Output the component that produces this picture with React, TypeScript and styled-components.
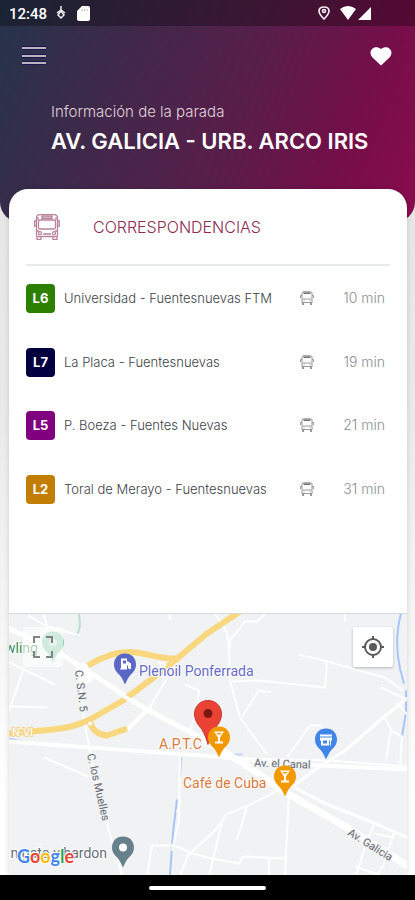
import React from "react";
import styled, { createGlobalStyle } from "styled-components";

const GlobalStyle = createGlobalStyle`
  *, *::before, *::after { box-sizing: border-box; }
  body { margin: 0; font-family: Inter, "Liberation Sans", sans-serif; }
`;

const Screen = styled.div`
  display: flex;
  flex-direction: column;
  min-height: 100vh;
  background: linear-gradient(180deg, #e2e2e2 0, #e9e9e9 400px, #ffffff 800px);
`;

const Header = styled.header`
  color: #fff;
  height: 222px;
  border-radius: 0 0 20px 20px;
  background: linear-gradient(112deg, #25344b 0%, #581e4a 56%, #740f49 80%, #8a0b4e 100%);
`;

const StatusBar = styled.div`
  display: flex;
  align-items: center;
  justify-content: space-between;
  height: 26px;
  padding: 0 44px 0 9px;
  background: rgba(0, 0, 0, 0.3);
`;

const StatusGroup = styled.div<{ $gap: number }>`
  display: flex;
  align-items: center;
  gap: ${(p) => p.$gap}px;
`;

const Clock = styled.time`
  margin-top: 2px;
  font: 500 15px/20px Roboto, sans-serif;
`;

const Toolbar = styled.nav`
  display: flex;
  align-items: center;
  justify-content: space-between;
  height: 60px;
  padding: 0 20px;
`;

const IconButton = styled.button`
  display: grid;
  place-items: center;
  width: 28px;
  height: 28px;
  padding: 0;
  border: 0;
  background: none;
  color: inherit;
  cursor: pointer;
`;

const Heading = styled.div`
  padding: 16px 0 0 51px;
`;

const Eyebrow = styled.p`
  margin: 0;
  font-size: 15px;
  font-weight: 300;
  line-height: 20px;
  color: #e0d3dc;
`;

const Title = styled.h1`
  margin: 4px 0 0;
  font-size: 22px;
  font-weight: 600;
  line-height: 30px;
  white-space: nowrap;
`;

const Card = styled.main`
  display: flex;
  flex: 1;
  flex-direction: column;
  margin: -33px 8px 0 9px;
  overflow: hidden;
  border-radius: 19px 19px 0 0;
  background: #fff;
  box-shadow: 0 0 5px rgba(0, 0, 0, 0.15);
`;

const SectionHeader = styled.div`
  display: flex;
  align-items: center;
  gap: 33px;
  height: 77px;
  margin: 0 17px;
  padding-left: 8px;
  border-bottom: 2px solid #e8eaea;
  color: #8d2a50;
`;

const SectionTitle = styled.h2`
  margin: 0;
  font-size: 16px;
  font-weight: 300;
  line-height: 20px;
`;

const Lines = styled.ul`
  flex: 1;
  margin: 0;
  padding: 0 22px 0 17px;
  list-style: none;
`;

const LineRow = styled.li`
  display: grid;
  grid-template-columns: 29px 1fr 14px 62px;
  align-items: center;
  column-gap: 9px;
  height: 64px;
  margin-bottom: -1px;

  &:nth-child(odd) {
    margin-bottom: 0;
  }
`;

const Badge = styled.span<{ $color: string }>`
  display: grid;
  place-items: center;
  height: 29px;
  border-radius: 4px;
  background: ${(p) => p.$color};
  color: #fff;
  font-size: 13px;
  font-weight: 700;
`;

const LineName = styled.span`
  color: #3c4247;
  font-size: 13px;
  font-weight: 300;
  line-height: 20px;
  white-space: nowrap;
`;

const Wait = styled.span`
  color: #8b8f92;
  font-size: 14px;
  font-weight: 300;
  line-height: 20px;
  text-align: right;
`;

const MapPanel = styled.section`
  position: relative;
  height: 262px;
  border-top: 1px solid #d6d8d9;
  background: #f0f2f3;
`;

const MapDrawing = styled.svg`
  display: block;
  width: 100%;
  height: 100%;
  font-family: Roboto, sans-serif;
`;

const MapButton = styled.button<{ $side: "left" | "right" }>`
  position: absolute;
  top: 13px;
  ${(p) => p.$side}: 14px;
  display: grid;
  place-items: center;
  width: 40px;
  height: 40px;
  padding: 0;
  border: 0;
  border-radius: 2px;
  background: ${(p) => (p.$side === "left" ? "rgba(255,255,255,.6)" : "#fff")};
  box-shadow: ${(p) => (p.$side === "left" ? "none" : "0 1px 3px rgba(0,0,0,.25)")};
  color: ${(p) => (p.$side === "left" ? "#808482" : "#5a5a5a")};
  cursor: pointer;
`;

const GoogleMark = styled.span`
  position: absolute;
  left: 8px;
  bottom: 9px;
  font: 700 18px/20px Lato, sans-serif;
  text-shadow: 1px 0 1px #fff, -1px 0 1px #fff, 0 1px 1px #fff, 0 -1px 1px #fff;
`;

const Letter = styled.span<{ $color: string }>`
  color: ${(p) => p.$color};
`;

const NavigationBar = styled.footer`
  display: grid;
  place-items: center;
  height: 25px;
  background: #000;
`;

const HomeHandle = styled.span`
  width: 28%;
  height: 4px;
  border-radius: 2px;
  background: #fff;
`;

const BusLarge = () => (
  <svg width="26" height="26" viewBox="0 0 26 26" fill="none" stroke="#b9839a" strokeWidth="1.300" aria-hidden="true">
    <path d="M2.5 22.5V4Q2.5.7 6 .7H20Q23.5.7 23.5 4V22.5" />
    <path d="M2.5 7H.7V12H2.5M23.5 7H25.300V12H23.5" />
    <rect x="4.500" y="6" width="17" height="9" rx="1.500" />
    <rect x="8" y="2" width="10" height="2.500" fill="#b9839a" fillOpacity=".5" />
    <path d="M4 6V3M22 6V3M2.500 17H5M21 17H23.500M3 22.500H23M9 20H17" />
    <path d="M3 22.500V25.300H7V22.500M19 22.500V25.300H23V22.500" />
    <circle cx="6" cy="19.200" r="1.500" />
    <circle cx="20" cy="19.200" r="1.500" />
  </svg>
);

const BusSmall = () => (
  <svg width="14" height="14" viewBox="0 0 14 14" fill="none" stroke="#96999b" aria-hidden="true">
    <path d="M2 12V2Q2 .7 4 .7H10Q12 .7 12 2V12" />
    <path d="M3.500 2.200H10.500" stroke="#6c7073" strokeWidth="1.600" />
    <path d="M2 4.500H.5V7M12 4.500H13.500V7M2.500 8H11.500M3.500 11.500H10.500" />
    <path d="M3 11V14M11 11V14" strokeWidth="2" />
    <path d="M3.500 9.800H4.500M9.500 9.800H10.500" />
  </svg>
);

const LINES = [
  { code: "L6", color: "#2b8000", name: "Universidad - Fuentesnuevas FTM", wait: "10 min" },
  { code: "L7", color: "#02003f", name: "La Placa - Fuentesnuevas", wait: "19 min" },
  { code: "L5", color: "#80007f", name: "P. Boeza - Fuentes Nuevas", wait: "21 min" },
  { code: "L2", color: "#c27d04", name: "Toral de Merayo - Fuentesnuevas", wait: "31 min" },
];

const GOOGLE: [string, string][] = [
  ["G", "#4285f4"],
  ["o", "#ea4335"],
  ["o", "#fbbc05"],
  ["g", "#4285f4"],
  ["l", "#34a853"],
  ["e", "#ea4335"],
];

type PinProps = { x: number; y: number; color: string; children?: React.ReactNode };

/* A place marker whose round head is centred on (x, y). */
const Pin = ({ x, y, color, children }: PinProps) => (
  <g transform={`translate(${x} ${y})`}>
    <path
      d="M0-11C-6.500-11-11-6.500-11 0C-11 5-8 8-5 11C-2.500 14-1.500 17 0 20C1.500 17 2.500 14 5 11C8 8 11 5 11 0C11-6.500 6.500-11 0-11Z"
      fill={color}
    />
    {children}
  </g>
);

const Glass = () => (
  <path d="M-5-6H5L1 0V4H4V6H-4V4H-1V0ZM-2.500-4.500L-1.500-3H1.500L2.500-4.500Z" fill="#fff" fillRule="evenodd" />
);

const CityMap = () => (
  <MapDrawing viewBox="9 613 398 262" preserveAspectRatio="xMidYMid slice" role="img" aria-label="Mapa de la parada">
    <g fill="none" stroke="#a9c5f7" strokeWidth="2">
      <path d="M401 613C396 632 396 650 400 668L404 683M406 690V712L402 736" />
      <path d="M181 757L180 776M177 799L173 832L170 875" />
      <path d="M9 738L36 744" stroke="#bccfef" />
      <path d="M227 754H243" stroke="#c9d3f5" />
    </g>
    <path d="M79 613L80 625L77 636" fill="none" stroke="#b9dfcb" strokeWidth="2" />
    <g fill="none" stroke="#fff" strokeWidth="2" strokeLinejoin="round">
      <path d="M28 615L45 625L80 635M44 613L47 628M9 662L55 684M23 670L9 711M9 706L47 707" />
      <path d="M80 670L81 690L84 720L90 750L100 800L122 875" />
      <path d="M44 757L88 776M170 613V619" />
      <path d="M150 706L167 678M185 684L199 690L195 717L189 732" />
      <path d="M215 613L227 632L229 648L230 680L240 717L267 754M265 613L258 621H245L230 640L229 654" />
      <path d="M232 681L259 680L325 687L327 661M298 654L328 661L352 668L385 677L403 690" />
      <path d="M242 716L259 690L271 692M345 613V621M381 687L407 699" />
      <path d="M287 757L310 725H322" />
      <path d="M384 715L391 729L386 759M397 702L407 714M391 730L402 736L400 767" />
      <path d="M180 756L179 820L172 850M181 799L177 812" />
      <path d="M280 789L250 804L226 814L217 828L188 855L180 875" />
      <path d="M222 822L209 875M247 805L243 820L237 839M289 793L285 875" />
      <path d="M147 875L152 845H174L193 853L207 857L239 863L243 856L285 858M269 858V875" />
      <path d="M374 823L366 844L356 875M395 830L383 866L376 875M356 866L380 875M374 833L393 837" />
    </g>
    <g fill="none" stroke="#fff" strokeLinecap="round" strokeLinejoin="round">
      <path d="M9 741L90 747L215 756L300 764L407 769" strokeWidth="4" />
      <path d="M240 758L330 760L407 766" strokeWidth="2" />
      <path d="M407 698L382 718L345 750L318 767L293 786" strokeWidth="3" />
      <path d="M127 729L150 707" strokeWidth="4" />
      <path d="M9 628L60 653L85 669L145 708L200 737" strokeWidth="5" />
      <path d="M200 737L245 764L287 793L347 827L407 865" strokeWidth="7" />
      <path d="M287 783L325 803L380 825L407 837" strokeWidth="3" />
      <path d="M82 668L87 677" strokeWidth="12" />
    </g>
    <g fill="none" stroke="#f9d77e" strokeWidth="6" strokeLinejoin="round">
      <path d="M88 665C104 655 121 650 137 652C151 654 160 659 180 658" />
      <path d="M240 611L207 633L176 659L155 676L123 700L90 719Q74 727 53 729L9 733" />
      <path d="M90 722Q94 734 107 735L127 728" />
    </g>
    <path d="M118 692L136 703" stroke="#fff" strokeWidth="4" />
    <circle cx="90" cy="723" r="2" fill="#fff" />
    <path d="M157 660L167 664L162 669Z" fill="#fff" />

    <g fill="#656a6e" fontSize="11" stroke="#f0f2f3" strokeWidth="2" paintOrder="stroke">
      <text transform="translate(75 670) rotate(83)">C. S.N. 5</text>
      <text transform="translate(87 754) rotate(77)">C. los Muelles</text>
      <text x="254" y="766" transform="rotate(2 254 766)">Av. el Canal</text>
      <text transform="translate(347 834) rotate(32)">Av. Galicia</text>
      <text x="12" y="735" fill="#fff" stroke="#f3d48a">N-VI</text>
    </g>
    <g fontSize="14" stroke="#fff" strokeWidth="2" paintOrder="stroke">
      <text x="5" y="652" fill="#3a8a50">wling</text>
      <text x="139" y="675" fill="#656ac8">Plenoil Ponferrada</text>
      <text x="159" y="748" fill="#d9783b">A.P.T.C</text>
      <text x="183" y="787" fill="#d9783b">Café de Cuba</text>
      <text x="107" y="857" textAnchor="end" fill="#656d76">n gato y bardon</text>
    </g>

    <Pin x={53} y={642} color="#8bcdaa">
      <circle r="4" fill="#c4e6d4" />
    </Pin>
    <Pin x={125} y={664} color="#5a67c5">
      <path d="M-4-6H2V5H-5V4H-4ZM-2-4V-1H1V-4ZM2-3H3L6-1V4Q4 6 3 3V1H2Z" fill="#fff" fillRule="evenodd" />
    </Pin>
    <Pin x={285} y={776} color="#f29900"><Glass /></Pin>
    <Pin x={326} y={739} color="#4285e8">
      <path d="M-6-5H6V-3H-6ZM-6-2H6L6 1H5V6H-5V1H-6ZM-3 1V4H1V1ZM3 1V6H4V1Z" fill="#fff" fillRule="evenodd" />
    </Pin>
    <Pin x={123} y={847} color="#66808c">
      <circle r="4" fill="#fff" />
    </Pin>
    <path
      d="M208 700C200 700 194.500 706 194.500 713.500C194.500 720 198 724 202 729C205 734 206.500 739 208 744C209.500 739 211 734 214 729C218 724 221.500 720 221.500 713.500C221.500 706 216 700 208 700Z"
      fill="#ea4335"
      stroke="#c5372c"
    />
    <circle cx="208" cy="713" r="4.500" fill="#7d1712" />
    <Pin x={219} y={737} color="#f29900"><Glass /></Pin>
  </MapDrawing>
);

export default function App() {
  return (
    <>
      <GlobalStyle />
      <Screen>
        <Header>
          <StatusBar>
            <StatusGroup $gap={9}>
              <Clock>12:48</Clock>
              <svg width="10" height="14" viewBox="0 0 10 14" fill="none" stroke="#eee" strokeWidth="1.500" aria-hidden="true">
                <path d="M5 0V5M1 7L5 4L9 7" />
                <path d="M5 5L8 9L5 12L2 9Z" />
              </svg>
              <svg width="15" height="15" viewBox="-2 0 15 15" aria-hidden="true">
                <path d="M5 0H11Q13 0 13 2V13Q13 15 11 15H2Q0 15 0 13V5Z" fill="#fff" />
                <path d="M5 3V5M7.500 3V5M10 3V5" stroke="#bbb" />
              </svg>
            </StatusGroup>
            <StatusGroup $gap={2}>
              <svg width="20" height="14" viewBox="0 0 20 14" fill="none" stroke="#f3e8ef" strokeWidth="1.700" aria-hidden="true">
                <path d="M6 13Q1 8 1 5Q1 1 6 1Q11 1 11 5Q11 8 6 13Z" />
                <circle cx="6" cy="5" r="1.500" />
              </svg>
              <svg width="16" height="14" viewBox="0 0 16 14" aria-hidden="true">
                <path d="M0 3Q8-3 16 3L8 14Z" fill="#fff" />
              </svg>
              <svg width="13" height="13" viewBox="0 0 13 13" aria-hidden="true">
                <path d="M13 0V13H0Z" fill="#fff" />
              </svg>
            </StatusGroup>
          </StatusBar>
          <Toolbar>
            <IconButton aria-label="Menú">
              <svg width="26" height="22" viewBox="0 0 26 22" aria-hidden="true">
                <path d="M1 3H25M1 11H25M1 18H25" stroke="#1f1650" strokeWidth="4" />
                <path d="M1 3H25M1 11H25M1 18H25" stroke="#b8b4c0" strokeWidth="2" />
              </svg>
            </IconButton>
            <IconButton aria-label="Favorito">
              <svg width="22" height="20" viewBox="0 0 22 20" aria-hidden="true">
                <path d="M11 19.500L2.500 11.500C-3 5.500 4-2.500 11 3C18-2.500 25 5.500 19.500 11.500Z" fill="#fff" />
              </svg>
            </IconButton>
          </Toolbar>
          <Heading>
            <Eyebrow>Información de la parada</Eyebrow>
            <Title>AV. GALICIA - URB. ARCO IRIS</Title>
          </Heading>
        </Header>
        <Card>
          <SectionHeader>
            <BusLarge />
            <SectionTitle>CORRESPONDENCIAS</SectionTitle>
          </SectionHeader>
          <Lines>
            {LINES.map((line) => (
              <LineRow key={line.code}>
                <Badge $color={line.color}>{line.code}</Badge>
                <LineName>{line.name}</LineName>
                <BusSmall />
                <Wait>{line.wait}</Wait>
              </LineRow>
            ))}
          </Lines>
          <MapPanel>
            <CityMap />
            <MapButton $side="left" aria-label="Pantalla completa">
              <svg width="20" height="22" viewBox="0 0 20 22" fill="none" stroke="currentColor" strokeWidth="2" aria-hidden="true">
                <path d="M1 7V1H7M13 1H19V7M19 15V21H13M7 21H1V15" />
              </svg>
            </MapButton>
            <MapButton $side="right" aria-label="Mi ubicación">
              <svg width="22" height="22" viewBox="0 0 22 22" fill="none" stroke="currentColor" strokeWidth="2" aria-hidden="true">
                <circle cx="11" cy="11" r="8" />
                <path d="M11 0V3M11 19V22M0 11H3M19 11H22" />
                <circle cx="11" cy="11" r="4" fill="currentColor" stroke="none" />
              </svg>
            </MapButton>
            <GoogleMark>
              {GOOGLE.map(([char, color], i) => (
                <Letter key={i} $color={color}>{char}</Letter>
              ))}
            </GoogleMark>
          </MapPanel>
        </Card>
        <NavigationBar>
          <HomeHandle />
        </NavigationBar>
      </Screen>
    </>
  );
}
